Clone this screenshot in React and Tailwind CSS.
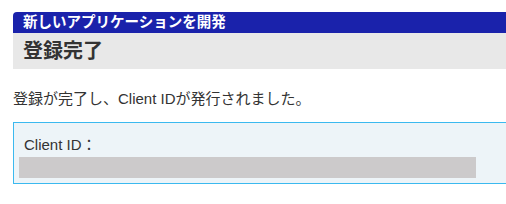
export default function App() {
  return (
    <div className="w-[506px] h-[204px] overflow-hidden bg-white" style={{ fontFamily: '"Liberation Sans", "Noto Sans CJK JP", sans-serif' }}>
      <div className="pt-[12px] pl-[13px] mr-[-20px] text-[#333333]">
        <div className="rounded-tl-[4px] bg-[#1a22ab] h-[21px] pl-[10px] text-white font-bold text-[14.5px] leading-[21px]">
          新しいアプリケーションを開発
        </div>
        <div className="bg-[#e8e8e8] h-[36px] pl-[10px] text-[20px] font-bold leading-[36px] text-[#333333]">
          登録完了
        </div>
        <p className="mt-[20px] text-[15px] leading-[20px]">登録が完了し、Client IDが発行されました。</p>
        <div className="mt-[13px] border border-[#3bb9ef] bg-[#edf4f8] pt-[12px] pb-[5px]">
          <div className="pl-[10px] text-[15px] leading-[20px]">Client ID：</div>
          <div className="mt-[2px] ml-[5px] w-[457px] h-[21px] bg-[#cccacb]"></div>
        </div>
      </div>
    </div>
  );
}
